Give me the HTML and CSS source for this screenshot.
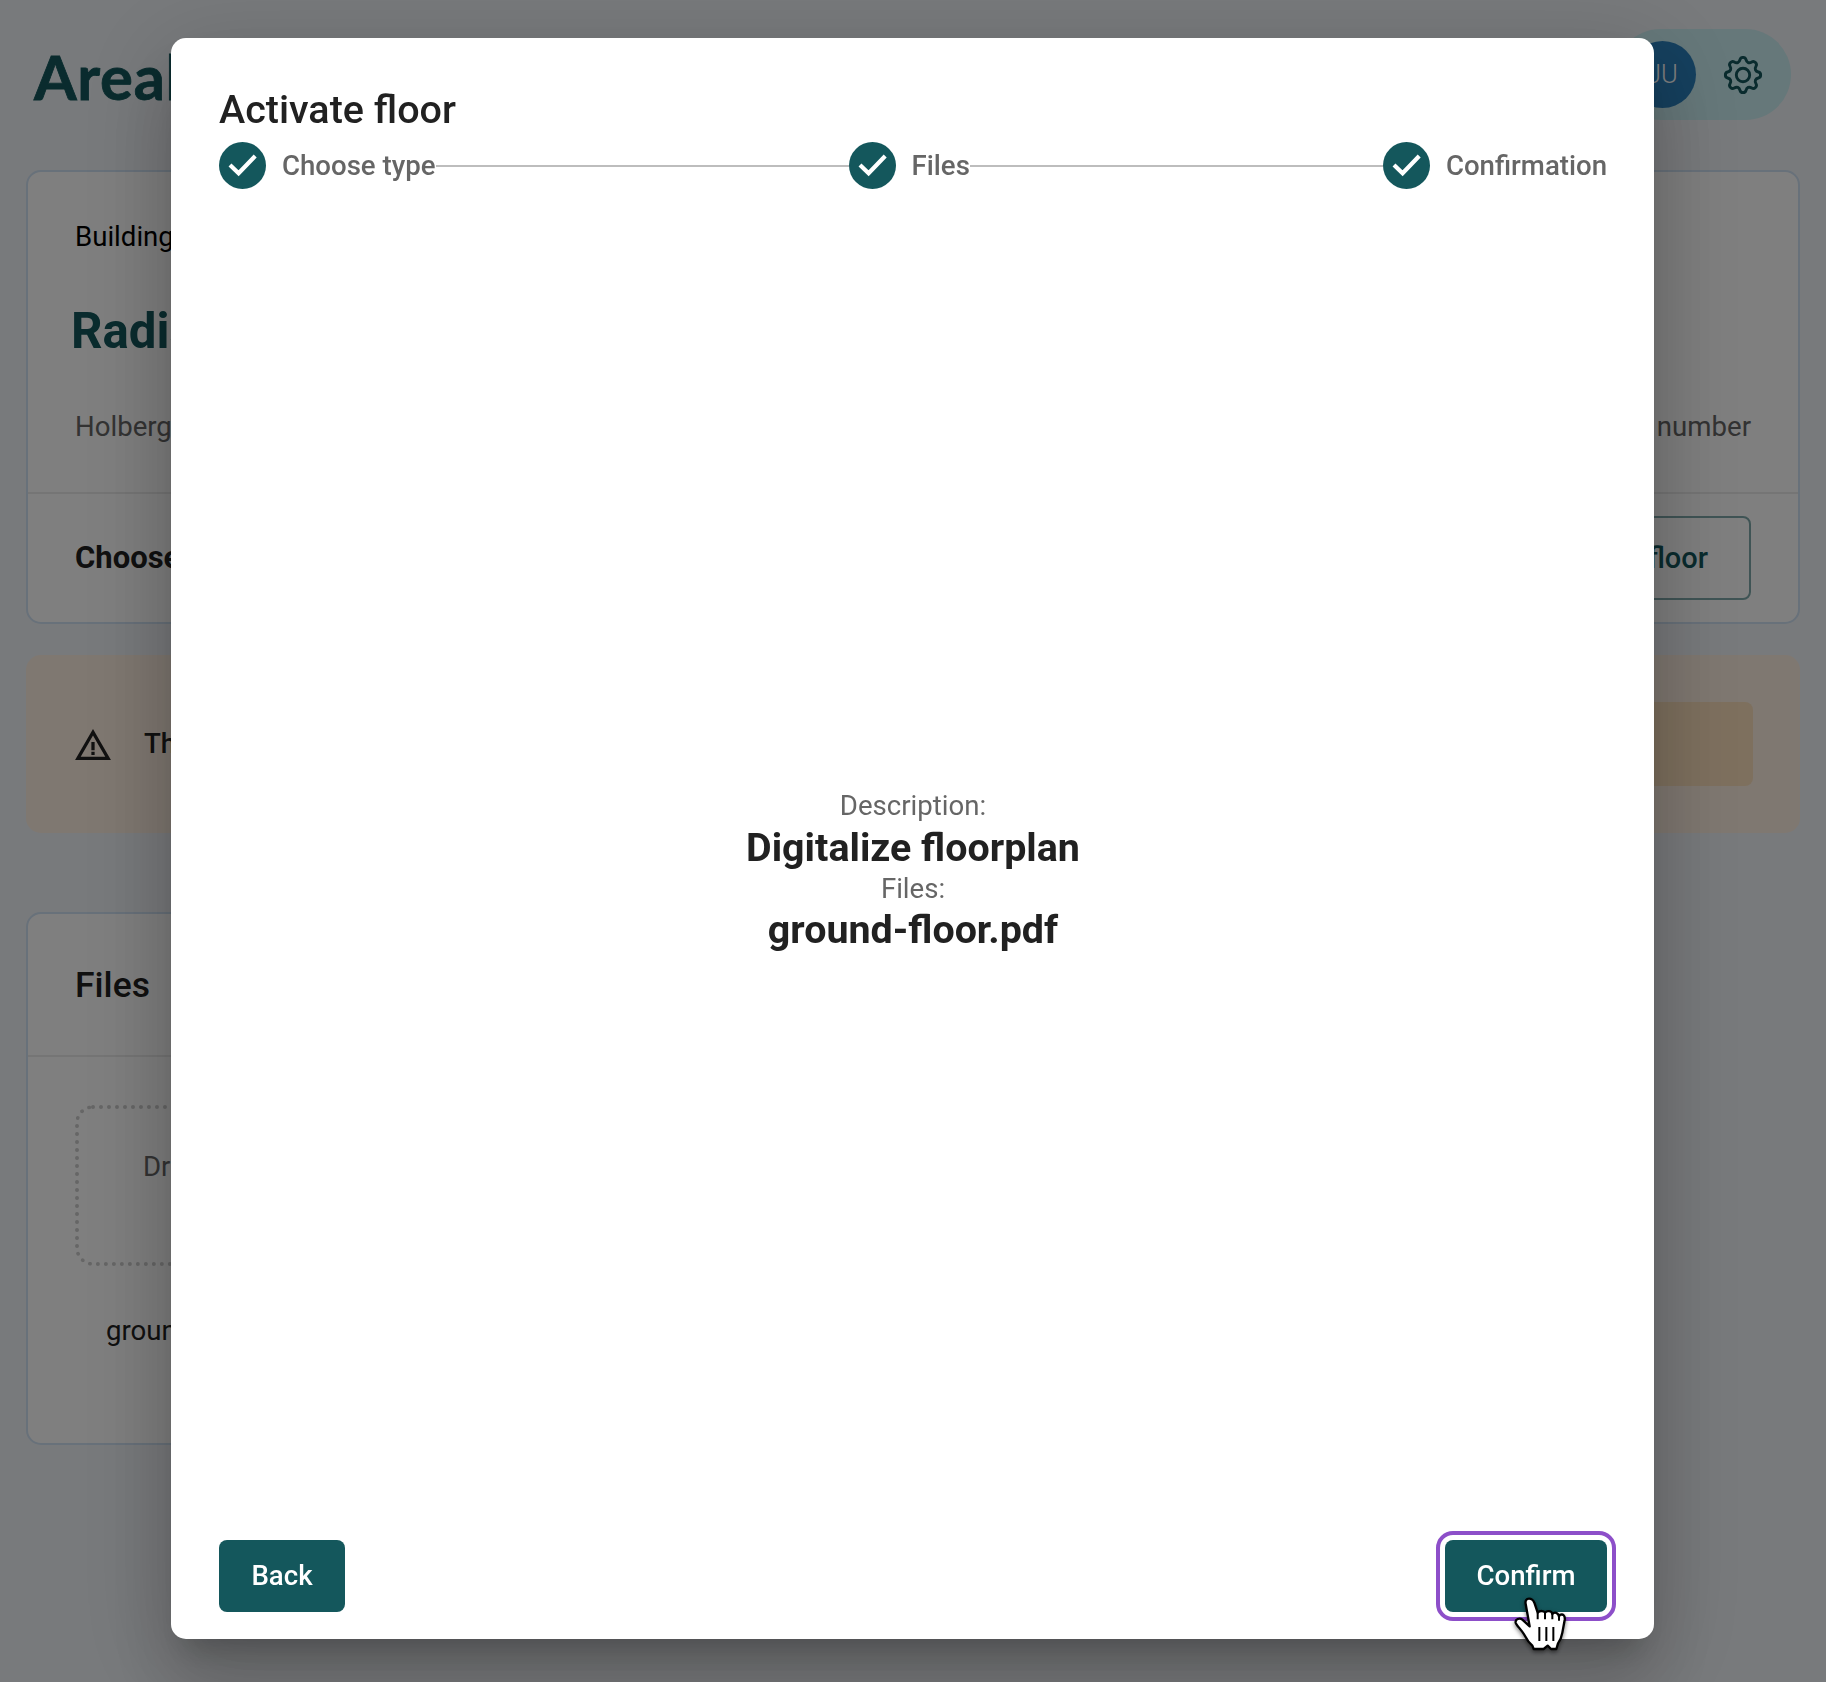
FILE: index.html
```html
<!DOCTYPE html>
<html lang="en">
<head>
<meta charset="utf-8">
<title>Activate floor</title>
<link rel="stylesheet" href="styles.css">
</head>
<body>
<div class="page">
  <header class="header">
    <div class="logo">Areal</div>
    <div class="account">
      <div class="avatar">JU</div>
      <svg class="gear" viewBox="-20 -20 40 40" fill="none" stroke="currentColor" stroke-width="2.9" stroke-linecap="round">
        <defs><path id="cog" d="M0-17.63Q2.48-17.63 3-15.38Q3.52-13.14 5.16-12.46Q6.8-11.78 8.75-13Q10.71-14.22 12.46-12.46Q14.22-10.71 13-8.75Q11.78-6.8 12.46-5.16Q13.14-3.52 15.38-3Q17.63-2.48 17.63 0"/></defs>
        <use href="#cog"/><use href="#cog" transform="rotate(90)"/><use href="#cog" transform="rotate(180)"/><use href="#cog" transform="rotate(270)"/>
        <circle r="6.7"/>
      </svg>
    </div>
  </header>

  <section class="card building">
    <div class="building-info">
      <div class="crumb">Building</div>
      <h1 class="building-name">Radis</h1>
      <div class="building-meta"><span>Holberg</span><span>number</span></div>
    </div>
    <div class="building-actions">
      <strong>Choose</strong>
      <div class="outline-button">floor</div>
    </div>
  </section>

  <section class="warning">
    <svg class="warning-icon" viewBox="1 2 22 19" fill="currentColor"><path d="M12 5.99 19.53 19H4.47L12 5.99M12 2 1 21h22L12 2zm1 14h-2v2h2v-2zm0-6h-2v5h2v-5z"/></svg>
    <span class="warning-text">Th</span>
    <div class="warning-button"></div>
  </section>

  <section class="card files">
    <h2 class="files-title">Files</h2>
    <div class="files-body">
      <div class="dropzone">Dr</div>
      <div class="file-name">groun</div>
    </div>
  </section>
</div>

<div class="backdrop">
  <div class="dialog" role="dialog">
    <h2 class="dialog-title">Activate floor</h2>
    <div class="stepper">
      <svg class="check" viewBox="0 0 47 47"><circle cx="23.5" cy="23.5" r="23.5"/><path d="M11 23.1l8.6 8.2L36.2 14"/></svg>
      <span class="step-label">Choose type</span>
      <span class="connector"></span>
      <svg class="check" viewBox="0 0 47 47"><circle cx="23.5" cy="23.5" r="23.5"/><path d="M11 23.1l8.6 8.2L36.2 14"/></svg>
      <span class="step-label">Files</span>
      <span class="connector"></span>
      <svg class="check" viewBox="0 0 47 47"><circle cx="23.5" cy="23.5" r="23.5"/><path d="M11 23.1l8.6 8.2L36.2 14"/></svg>
      <span class="step-label">Confirmation</span>
    </div>
    <div class="summary">
      <div class="summary-label">Description:</div>
      <div class="summary-value">Digitalize floorplan</div>
      <div class="summary-label">Files:</div>
      <div class="summary-value">ground-floor.pdf</div>
    </div>
    <div class="actions">
      <button class="button back">Back</button>
      <button class="button confirm">Confirm
        <svg class="pointer" viewBox="335 285 170 180">
          <path d="M386 296C378 296 374 302 376 312L388 379L366 359C358 352 344 358 346 368C348 376 366 392 374 408C382 424 388 430 396 437L400 447H430L442 437L452 447H468L473 430C482 418 484 410 486 398L493 360C495 346 488 341 478 345L476 350C474 337 462 335 456 342C454 332 440 331 434 338C432 332 418 331 412 338L402 308C398 299 393 296 386 296Z" fill="#fff" stroke="#000" stroke-width="7" stroke-linejoin="round"/>
          <path d="M417 381V423M438 381V423M459 381V423M412 338V358M434 338V358M456 342V358M476 350V362" fill="none" stroke="#000" stroke-width="6"/>
        </svg>
      </button>
    </div>
  </div>
</div>
</body>
</html>
```

FILE: styles.css
```css
* { box-sizing: border-box; }

body {
  margin: 0;
  height: 1682px;
  overflow: hidden;
  background: #f1f4f8;
  color: #212121;
  font: 27.6px/39.5px Roboto, sans-serif;
}

h1, h2 { margin: 0; }

.page { padding: 29px 26px 0; }

.header {
  display: flex;
  justify-content: space-between;
  align-items: center;
  height: 91px;
  padding: 0 9px 0 8px;
}

.logo {
  padding-top: 2px;
  color: #14575c;
  font: 700 61.5px/70px Lato, sans-serif;
  letter-spacing: .7px;
  -webkit-text-stroke: .8px #14575c;
}

.account {
  display: flex;
  align-items: center;
  gap: 27px;
  width: 176px;
  height: 91px;
  padding-left: 14px;
  border-radius: 46px;
  background: #ccf0f4;
  color: #14575c;
}

.avatar {
  width: 67px;
  height: 67px;
  border-radius: 50%;
  background: #2a80bd;
  color: #fff;
  font-size: 25.5px;
  font-weight: 300;
  line-height: 66px;
  text-align: center;
}

.gear { width: 40px; height: 40px; }

.card {
  border: 2px solid #d0e2f4;
  border-radius: 15px;
  background: #fff;
}

.building {
  display: flex;
  flex-direction: column;
  height: 454px;
  margin-top: 50px;
}

.building-info {
  height: 322px;
  padding: 45px 47px 0;
  border-bottom: 2px solid #ebebeb;
}

.crumb { color: #000; }

.building-name {
  margin: 44px 0 0 -4px;
  color: #14575c;
  font-size: 49.2px;
  line-height: 60px;
}

.building-meta {
  display: flex;
  justify-content: space-between;
  margin-top: 46px;
  color: #666;
}

.building-actions {
  display: flex;
  flex: 1;
  align-items: center;
  justify-content: space-between;
  padding: 0 47px 1px;
  font-size: 31px;
}

.outline-button {
  width: 200px;
  height: 84px;
  padding-right: 41px;
  border: 2px solid #7fa9ab;
  border-radius: 8px;
  color: #14575c;
  font-size: 29px;
  font-weight: 500;
  line-height: 80px;
  text-align: right;
}

.warning {
  display: flex;
  align-items: center;
  height: 178px;
  margin-top: 31px;
  padding: 0 47px 0 49px;
  border-radius: 15px;
  background: #fff0e2;
}

.warning-icon { width: 36px; height: 31px; }

.warning-text { margin-left: 33px; font-weight: 500; }

.warning-button {
  width: 200px;
  height: 84px;
  margin-left: auto;
  border-radius: 8px;
  background: #fce1bd;
}

.files {
  width: 1200px;
  height: 533px;
  margin-top: 79px;
}

.files-title {
  height: 143px;
  padding-left: 47px;
  border-bottom: 2px solid #ebebeb;
  font-size: 35.5px;
  font-weight: 500;
  line-height: 142px;
}

.files-body { padding: 48px 47px; }

.dropzone {
  height: 161px;
  padding: 38px 64px;
  border: 4px dotted #ccc;
  border-radius: 18px;
  color: #666;
}

.file-name { padding: 45px 0 0 31px; }

.backdrop {
  position: fixed;
  inset: 0;
  display: flex;
  justify-content: center;
  align-items: flex-start;
  padding: 38px 1px 0 0;
  background: rgba(0, 0, 0, .5);
}

.dialog {
  display: flex;
  flex-direction: column;
  width: 1483px;
  height: 1601px;
  padding: 47px 47px 27px 48px;
  border-radius: 15px;
  background: #fff;
  box-shadow: 0 22px 30px -14px rgba(0, 0, 0, .2), 0 47px 75px 6px rgba(0, 0, 0, .14), 0 18px 91px 16px rgba(0, 0, 0, .12);
}

.dialog-title {
  font-size: 39.5px;
  font-weight: 500;
  line-height: 49px;
}

.stepper {
  display: flex;
  align-items: center;
  height: 47px;
  margin-top: 8px;
}

.check { width: 47px; height: 47px; fill: #14575c; }

.check path { fill: none; stroke: #fff; stroke-width: 4.2; }

.step-label { margin-left: 16px; color: #666; font-weight: 500; line-height: 39px; }

.connector { flex: 1; height: 2px; background: #bdbdbd; }

.summary {
  display: flex;
  flex: 1;
  flex-direction: column;
  justify-content: center;
  padding-top: 8px;
  text-align: center;
}

.summary-label { color: #666; }

.summary-value { font-size: 39.4px; font-weight: 700; line-height: 43px; }

.actions { display: flex; justify-content: space-between; }

.button {
  position: relative;
  height: 72px;
  padding: 0;
  border: 0;
  border-radius: 8px;
  background: #14575c;
  color: #fff;
  font: 500 27.6px/72px Roboto, sans-serif;
}

.back { width: 126px; }

.confirm {
  width: 162px;
  outline: 4px solid #8d4fc9;
  outline-offset: 5px;
}

.pointer {
  position: absolute;
  left: 67px;
  top: 55px;
  width: 56.7px;
  height: 60px;
  filter: drop-shadow(0 2px 2px rgba(0, 0, 0, .5));
}
```
